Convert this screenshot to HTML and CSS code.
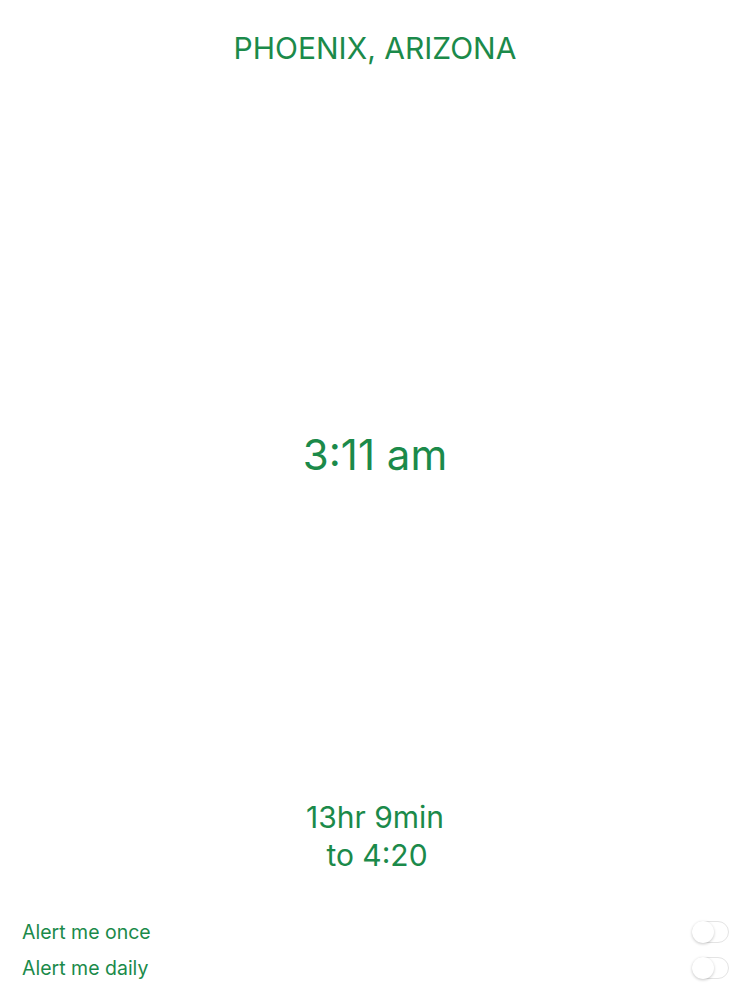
FILE: index.html
```html
<!DOCTYPE html>
<html>
<head>
<meta charset="utf-8">
<link rel="stylesheet" href="styles.css">
</head>
<body>
<div class="screen">
  <header class="title">PHOENIX, ARIZONA</header>
  <main class="clock">3:11 am</main>
  <section class="remaining">
    <div>13hr 9min</div>
    <div class="to">to 4:20</div>
  </section>
  <section class="alerts">
    <div class="alert-row">
      <span>Alert me once</span>
      <span class="switch"><span class="knob"></span></span>
    </div>
    <div class="alert-row">
      <span>Alert me daily</span>
      <span class="switch"><span class="knob"></span></span>
    </div>
  </section>
</div>
</body>
</html>
```

FILE: styles.css
```css
html, body {
  margin: 0;
  padding: 0;
  background: #ffffff;
}
.screen {
  width: 750px;
  height: 1000px;
  display: flex;
  flex-direction: column;
  font-family: Inter, "Noto Sans", sans-serif;
  color: #1b8a4a;
  box-sizing: border-box;
}
.title {
  text-align: center;
  font-size: 30px;
  line-height: 40px;
  padding-top: 28px;
  letter-spacing: 0;
}
.clock {
  flex: 1;
  display: flex;
  align-items: center;
  justify-content: center;
  font-size: 42px;
  padding-top: 42px;
}
.remaining {
  text-align: center;
  font-size: 30px;
  line-height: 38px;
  padding-bottom: 40px;
}
.to {
  padding-left: 4px;
}
.alerts {
  display: flex;
  flex-direction: column;
  padding: 0 21px 14px 22px;
}
.alert-row {
  display: flex;
  justify-content: space-between;
  align-items: center;
  height: 36px;
  font-size: 19.5px;
}
.switch {
  width: 37px;
  height: 22px;
  border-radius: 11px;
  border: 1px solid #e4e4e4;
  background: #ffffff;
  position: relative;
  box-sizing: border-box;
}
.knob {
  position: absolute;
  left: -1px;
  top: -1px;
  width: 22px;
  height: 22px;
  border-radius: 50%;
  background: #ffffff;
  box-shadow: 0 1px 3px rgba(0,0,0,0.22);
}
```
